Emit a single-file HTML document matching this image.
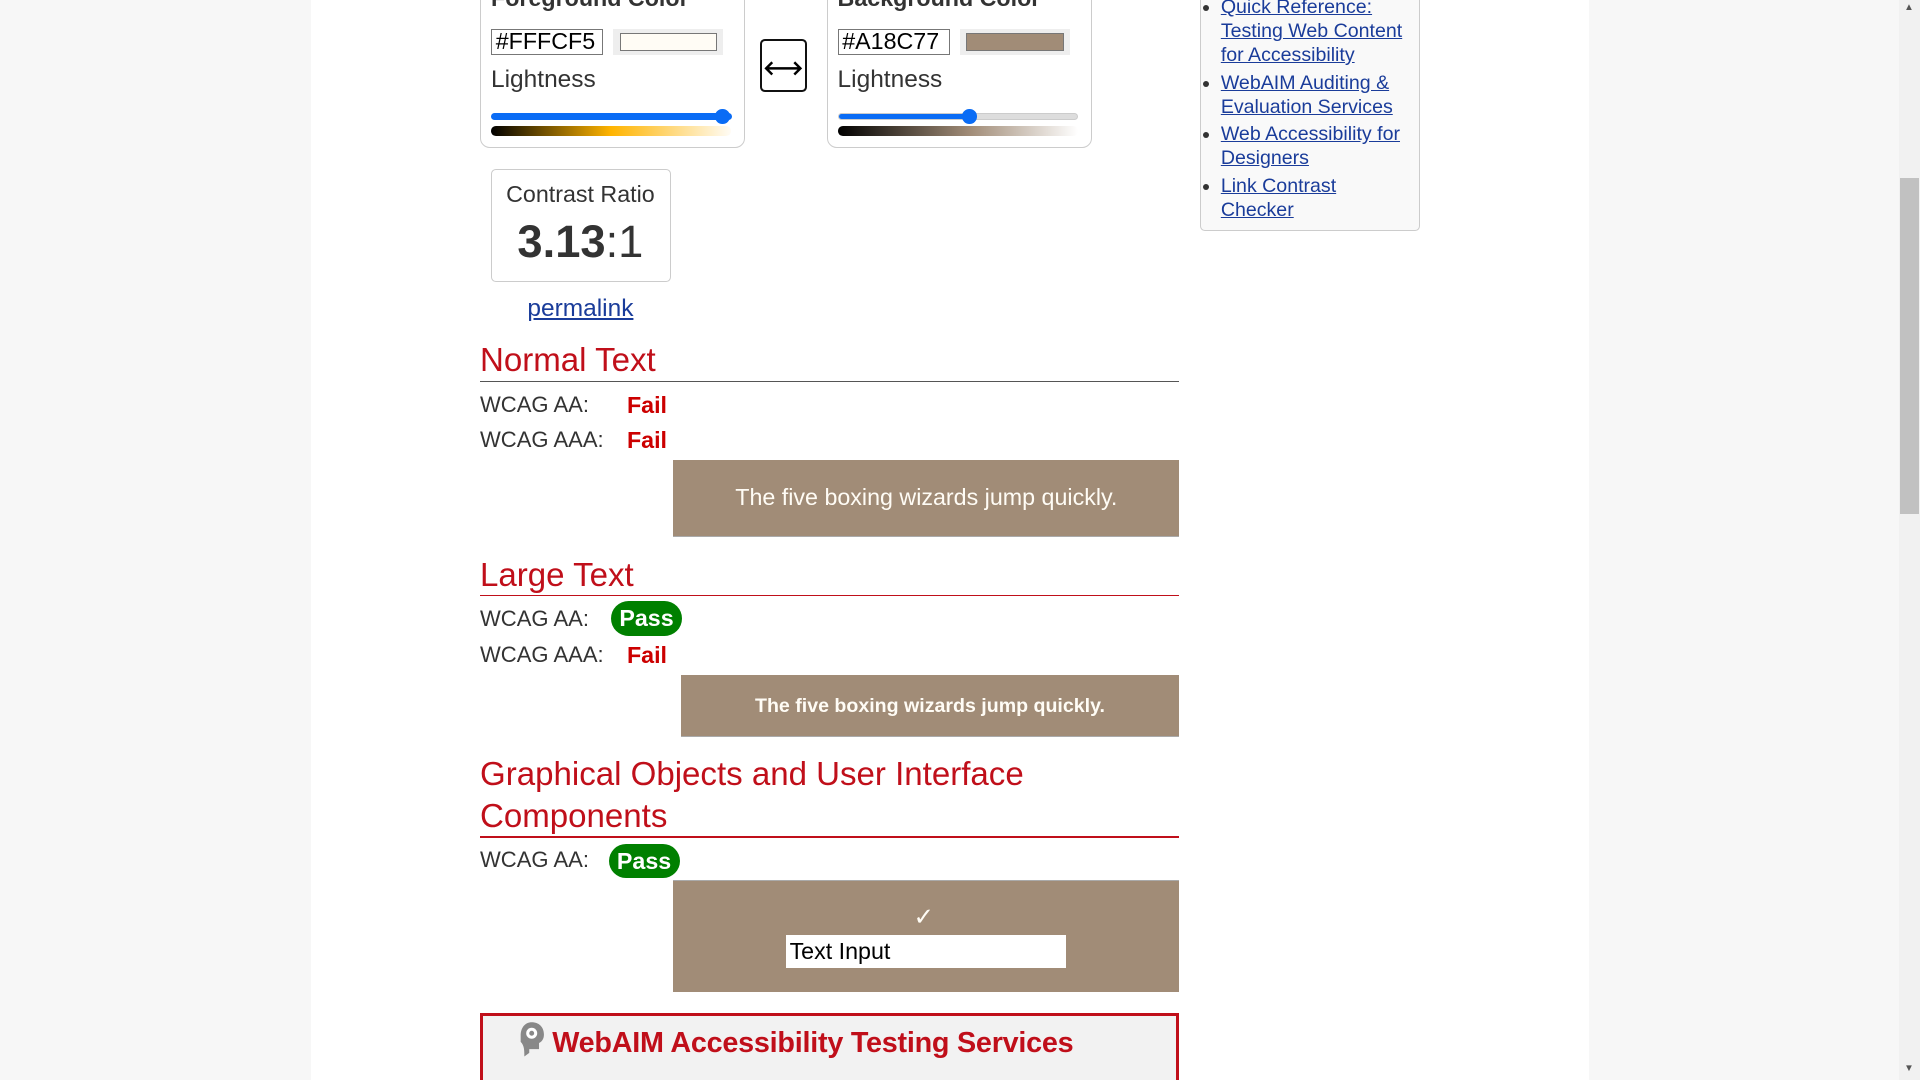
<!DOCTYPE html><html><head><meta charset="utf-8"><style>
html,body{margin:0;padding:0;overflow:hidden}
body{width:1920px;height:1080px;background:#f7f7f7;font-family:"Liberation Sans",sans-serif;color:#333}
#w{zoom:1.224490;position:relative;width:1568px;height:882px;overflow:hidden}
.a{position:absolute}
.col{left:254px;top:0;width:1044px;height:882px;background:#fff}
.box{border:1px solid #ccc;border-radius:8px;background:#fff}
.inp{border:1px solid #777;height:19px;font-size:19px;line-height:19px;padding-left:3px;color:#000;background:#fff}
.sw{background:#eee;padding:3px 5px}
.lt{font-size:20px;color:#333}
.track{height:4px;border-radius:3px;background:#ddd;border:1px solid #ccc}
.h2{font-size:27px;color:#c00f1a;line-height:34px}
.row{font-size:18px;color:#333}
.fail{font-size:19px;font-weight:bold;color:#c00}
.pass{background:#008000;color:#fff;font-weight:bold;font-size:19px;border-radius:15px;text-align:center;line-height:28px;height:28px}
a{color:#1a3c9a;text-decoration:underline}
li{margin-bottom:3px}
</style></head><body><div id="w">
<div class="a col"></div>
<!-- FG -->
<div class="a box" style="left:392px;top:-12px;width:215px;height:131px"></div>
<div class="a" style="left:401px;top:-12px;font-size:19px;font-weight:bold;color:#333">Foreground Color</div>
<div class="a inp" style="left:401px;top:24px;width:87px">#FFFCF5</div>
<div class="a sw" style="left:501px;top:24px"><div style="width:78px;height:13px;background:#FFFCF5;border:1px solid #777"></div></div>
<div class="a lt" style="left:401px;top:54px">Lightness</div>
<div class="a track" style="left:401px;top:92px;width:195px;background:#0a6cf5;border-color:#0a6cf5"></div>
<div class="a" style="left:584px;top:89px;width:12px;height:12px;border-radius:50%;background:#0a6cf5"></div>
<div class="a" style="left:401px;top:103px;width:196px;height:8px;border-radius:4px;background:linear-gradient(90deg,#000,#ffb400 50%,#fffcf5)"></div>
<!-- swap -->
<div class="a" style="left:621px;top:32px;width:38px;height:43px;border:2px solid #111;border-radius:4px;box-sizing:border-box"></div>
<svg class="a" style="left:621px;top:32px" width="38" height="43"><path d="M5 24H33M10 19L5 24L10 29M28 19L33 24L28 29" stroke="#000" stroke-width="2" fill="none"/></svg>
<!-- BG -->
<div class="a box" style="left:675px;top:-12px;width:215px;height:131px"></div>
<div class="a" style="left:684px;top:-12px;font-size:19px;font-weight:bold;color:#333">Background Color</div>
<div class="a inp" style="left:684px;top:24px;width:87px">#A18C77</div>
<div class="a sw" style="left:784px;top:24px"><div style="width:78px;height:13px;background:#A18C77;border:1px solid #777"></div></div>
<div class="a lt" style="left:684px;top:54px">Lightness</div>
<div class="a track" style="left:684px;top:92px;width:195px"></div>
<div class="a" style="left:685px;top:93px;width:106px;height:4px;border-radius:3px;background:#0a6cf5"></div>
<div class="a" style="left:786px;top:89px;width:12px;height:12px;border-radius:50%;background:#0a6cf5"></div>
<div class="a" style="left:684px;top:103px;width:196px;height:8px;border-radius:4px;background:linear-gradient(90deg,#000,#A18C77 55%,#fff)"></div>
<!-- ratio -->
<div class="a box" style="left:401px;top:138px;width:145px;height:91px;border-radius:4px"></div>
<div class="a" style="left:401px;top:148px;width:146px;text-align:center;font-size:19px">Contrast Ratio</div>
<div class="a" style="left:401px;top:176px;width:146px;text-align:center;font-size:37px"><b>3.13</b>:1</div>
<div class="a" style="left:401px;top:241px;width:146px;text-align:center;font-size:20px"><a>permalink</a></div>
<!-- normal -->
<div class="a h2" style="left:392px;top:278px">Normal Text</div>
<div class="a" style="left:392px;top:311px;width:571px;height:1px;background:#555"></div>
<div class="a row" style="left:392px;top:320px">WCAG AA:</div><div class="a fail" style="left:512px;top:320px">Fail</div>
<div class="a row" style="left:392px;top:349px">WCAG AAA:</div><div class="a fail" style="left:512px;top:349px">Fail</div>
<div class="a" style="left:550px;top:376px;width:413px;height:62px;background:#A18C77;color:#FFFCF5;font-size:19px;line-height:62px;text-align:center;border-bottom:1px solid #aaa">The five boxing wizards jump quickly.</div>
<!-- large -->
<div class="a h2" style="left:392px;top:453px">Large Text</div>
<div class="a" style="left:392px;top:486px;width:571px;height:1px;background:#c00f1a"></div>
<div class="a row" style="left:392px;top:495px">WCAG AA:</div><div class="a pass" style="left:499px;top:491px;width:58px">Pass</div>
<div class="a row" style="left:392px;top:524px">WCAG AAA:</div><div class="a fail" style="left:512px;top:524px">Fail</div>
<div class="a" style="left:556px;top:551px;width:407px;height:50px;background:#A18C77;color:#FFFCF5;font-size:16px;font-weight:bold;line-height:51px;text-align:center;border-bottom:1px solid #aaa">The five boxing wizards jump quickly.</div>
<!-- graphical -->
<div class="a h2" style="left:392px;top:616px">Graphical Objects and User Interface<br>Components</div>
<div class="a" style="left:392px;top:683px;width:571px;height:1px;background:#c00f1a"></div>
<div class="a row" style="left:392px;top:692px">WCAG AA:</div><div class="a pass" style="left:497px;top:689px;width:58px">Pass</div>
<div class="a" style="left:550px;top:719px;width:413px;height:90px;background:#A18C77;border-top:1px solid #aaa"></div>
<div class="a" style="left:746px;top:737px;font-size:20px;color:#FFFCF5">✓</div>
<div class="a" style="left:641px;top:763px;width:226px;height:27px;background:#fff;border:1px solid #A18C77;font-size:19px;line-height:27px;padding-left:3px;color:#000">Text Input</div>
<!-- services -->
<div class="a" style="left:392px;top:827px;width:566px;height:70px;border:3px solid #c00f1a;background:#f2f2f2"></div>
<svg class="a" style="left:422px;top:834px" width="24" height="30"><path d="M3 12C3 5 7 1 12 1C18 1 22 5 22 11C22 15 20 17 18 18L18 23L10 23L10 26L6 29C6 24 6 20 3 17Z" fill="#888"/><circle cx="12" cy="10" r="4.5" fill="#fff"/><circle cx="12" cy="10" r="2" fill="#888"/></svg>
<div class="a" style="left:451px;top:839px;font-size:23.5px;font-weight:bold;color:#c00f1a;letter-spacing:-0.2px">WebAIM Accessibility Testing Services</div>
<!-- sidebar -->
<div class="a" style="left:980px;top:-10px;width:178px;height:197px;background:#f9f9f9;border:1px solid #ccc;border-radius:0 0 4px 4px"></div>
<ul class="a" style="left:980px;top:-4px;margin:0;padding:0 0 0 17px;width:158px;font-size:16px;line-height:19.6px;list-style:disc">
<li><a>Quick Reference: Testing Web Content for Accessibility</a></li>
<li><a>WebAIM Auditing &amp; Evaluation Services</a></li>
<li><a>Web Accessibility for Designers</a></li>
<li><a>Link Contrast Checker</a></li>
</ul>
<!-- scrollbar -->
<div class="a" style="left:1551px;top:0;width:17px;height:882px;background:#f1f1f1"></div>
<div class="a" style="left:1552px;top:145px;width:15px;height:275px;background:#c1c1c1"></div>
<div class="a" style="left:1555px;top:2px;font-size:8px;color:#555">▲</div>
<div class="a" style="left:1555px;top:868px;font-size:8px;color:#555">▼</div>
</div></body></html>
